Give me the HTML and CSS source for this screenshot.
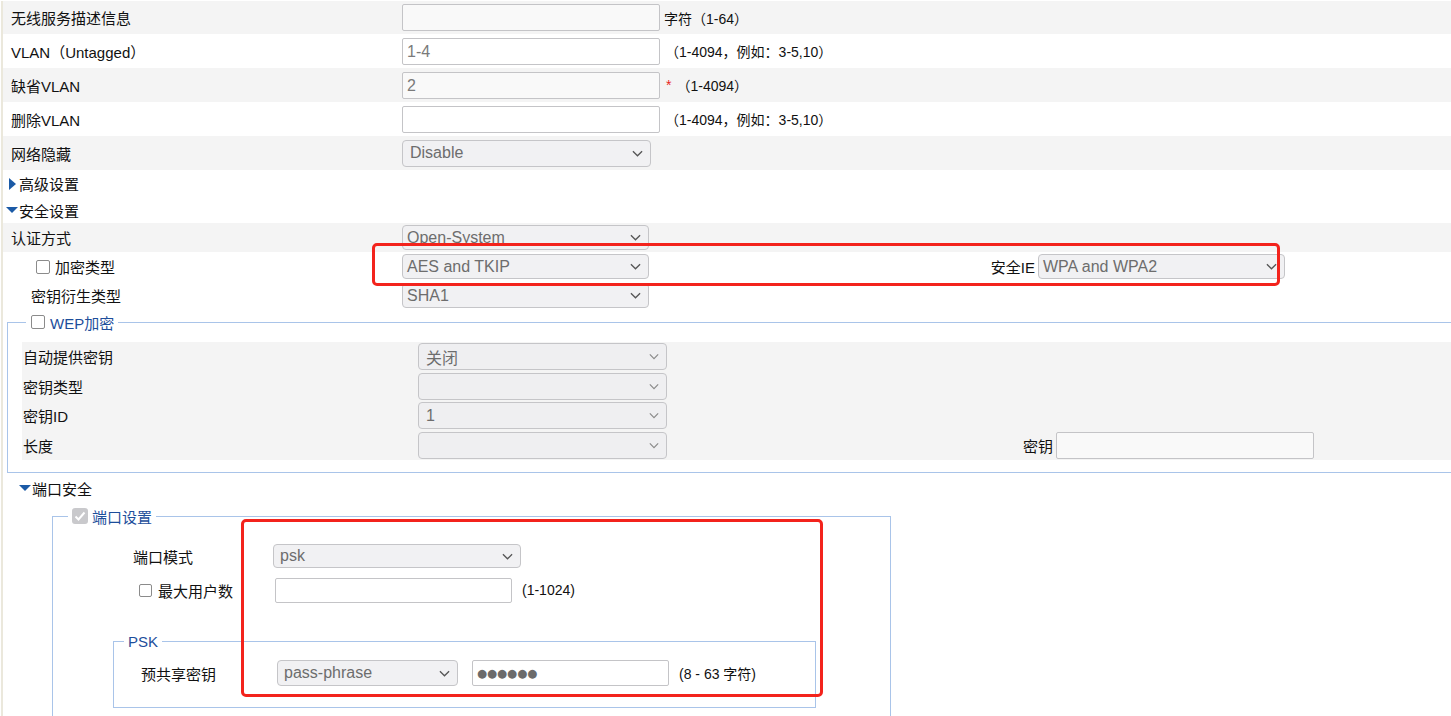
FILE: index.html
```html
<!DOCTYPE html>
<html lang="zh-CN">
<head>
    <meta charset="UTF-8">
    <title>无线服务配置</title>
    <link rel="stylesheet" href="styles.css">
</head>
<body>
<div class="page">
    <div class="row alt">
        <div class="label">无线服务描述信息</div>
        <div class="text-input muted"></div>
        <span class="hint near">字符（1-64）</span>
    </div>
    <div class="row">
        <div class="label">VLAN（Untagged）</div>
        <div class="text-input">1-4</div>
        <span class="hint">（1-4094，例如：3-5,10）</span>
    </div>
    <div class="row alt">
        <div class="label">缺省VLAN</div>
        <div class="text-input muted">2</div>
        <span class="required">*</span>
        <span class="hint">（1-4094）</span>
    </div>
    <div class="row">
        <div class="label">删除VLAN</div>
        <div class="text-input"></div>
        <span class="hint">（1-4094，例如：3-5,10）</span>
    </div>
    <div class="row alt">
        <div class="label">网络隐藏</div>
        <div class="select tall"><span>Disable</span><svg class="chev" viewBox="0 0 12 7"><path d="M1 1l5 5 5-5"/></svg></div>
    </div>

    <div class="toggle first"><span class="tri-right"></span>高级设置</div>
    <div class="toggle second"><span class="tri-down"></span>安全设置</div>

    <div class="sec-row alt">
        <div class="label">认证方式</div>
        <div class="cell-ctrl">
            <div class="select"><span>Open-System</span><svg class="chev" viewBox="0 0 12 7"><path d="M1 1l5 5 5-5"/></svg></div>
        </div>
    </div>
    <div class="sec-row">
        <div class="label indent-check"><span class="check"></span>加密类型</div>
        <div class="cell-ctrl">
            <div class="select"><span>AES and TKIP</span><svg class="chev" viewBox="0 0 12 7"><path d="M1 1l5 5 5-5"/></svg></div>
        </div>
        <div class="label2">安全IE</div>
        <div class="select"><span>WPA and WPA2</span><svg class="chev" viewBox="0 0 12 7"><path d="M1 1l5 5 5-5"/></svg></div>
    </div>
    <div class="sec-row">
        <div class="label indent">密钥衍生类型</div>
        <div class="cell-ctrl">
            <div class="select"><span>SHA1</span><svg class="chev" viewBox="0 0 12 7"><path d="M1 1l5 5 5-5"/></svg></div>
        </div>
    </div>

    <fieldset class="wep">
        <legend><span class="check"></span>WEP加密</legend>
        <div class="wep-body">
            <div class="wep-row">
                <div class="wep-label">自动提供密钥</div>
                <div class="cell-ctrl">
                    <div class="select light"><span>关闭</span><svg class="chev" viewBox="0 0 12 7"><path d="M1 1l5 5 5-5"/></svg></div>
                </div>
            </div>
            <div class="wep-row">
                <div class="wep-label">密钥类型</div>
                <div class="cell-ctrl">
                    <div class="select light"><span></span><svg class="chev" viewBox="0 0 12 7"><path d="M1 1l5 5 5-5"/></svg></div>
                </div>
            </div>
            <div class="wep-row">
                <div class="wep-label">密钥ID</div>
                <div class="cell-ctrl">
                    <div class="select light"><span>1</span><svg class="chev" viewBox="0 0 12 7"><path d="M1 1l5 5 5-5"/></svg></div>
                </div>
            </div>
            <div class="wep-row">
                <div class="wep-label">长度</div>
                <div class="cell-ctrl">
                    <div class="select light"><span></span><svg class="chev" viewBox="0 0 12 7"><path d="M1 1l5 5 5-5"/></svg></div>
                </div>
                <div class="label2 wide">密钥</div>
                <div class="text-input muted"></div>
            </div>
        </div>
    </fieldset>

    <div class="toggle port"><span class="tri-down"></span>端口安全</div>

    <fieldset class="port-set">
        <legend><span class="check checked"><svg viewBox="0 0 16 16"><path d="M3.5 8.5l3 3 6-7"/></svg></span>端口设置</legend>
        <div class="port-row">
            <div class="port-label">端口模式</div>
            <div class="select psk-mode"><span>psk</span><svg class="chev" viewBox="0 0 12 7"><path d="M1 1l5 5 5-5"/></svg></div>
        </div>
        <div class="port-row">
            <div class="port-label boxed"><span class="check small"></span>最大用户数</div>
            <div class="text-input users"></div>
            <span class="hint gap">(1-1024)</span>
        </div>

        <fieldset class="psk">
            <legend>PSK</legend>
            <div class="port-row">
                <div class="psk-label">预共享密钥</div>
                <div class="select phrase"><span>pass-phrase</span><svg class="chev" viewBox="0 0 12 7"><path d="M1 1l5 5 5-5"/></svg></div>
                <div class="text-input secret"><span class="dots">●●●●●●</span></div>
                <span class="hint gap">(8 - 63 字符)</span>
            </div>
        </fieldset>
    </fieldset>

    <div class="mark mark-ie"></div>
    <div class="mark mark-port"></div>
</div>
</body>
</html>
```

FILE: styles.css
```css
body {
    margin: 0;
    overflow: hidden;
    font-family: 'Liberation Sans', 'Noto Sans CJK SC', sans-serif;
    font-size: 15px;
    color: #111;
    background: #fff;
}
.page {
    position: relative;
    width: 1480px;
    margin-left: 1px;
    padding-top: 0;
    border-left: 2px solid #ebe8dc;
    min-height: 760px;
}
.row {
    display: flex;
    align-items: center;
    height: 34px;
}
.row:first-child {
    margin-top: 1px;
    height: 33px;
}
.alt {
    background-color: #f4f4f4;
}
.label {
    width: 399px;
    padding-left: 8px;
    box-sizing: border-box;
    flex: none;
}
.label.indent {
    padding-left: 28px;
}
.label.indent-check {
    display: flex;
    align-items: center;
    padding-left: 33px;
}
.text-input {
    width: 258px;
    height: 27px;
    box-sizing: border-box;
    border: 1px solid #c4c4c7;
    border-radius: 2px;
    background: #fff;
    padding: 0 4px;
    font-size: 16px;
    line-height: 25px;
    color: #7a7a7a;
    flex: none;
}
.text-input.muted {
    background: #f9f9f9;
}
.hint {
    margin-left: 5px;
    font-size: 14px;
}
.hint.near {
    margin-left: 4px;
}
.hint.gap {
    margin-left: 10px;
}
.required {
    color: #e8261e;
    margin-left: 6px;
    font-size: 14px;
}
.select {
    display: flex;
    align-items: center;
    justify-content: space-between;
    width: 247px;
    height: 25px;
    box-sizing: border-box;
    border: 1px solid #c5c5c8;
    border-radius: 4px;
    background: #f1f1f3;
    padding: 0 7px 0 4px;
    font-size: 16px;
    color: #6d6d6d;
    flex: none;
}
.select.tall {
    width: 249px;
    height: 27px;
    padding-left: 7px;
}
.select.light {
    width: 249px;
    height: 27px;
    padding-left: 7px;
    background: #efeff1;
}
.select.light .chev {
    stroke: #8a8a8a;
    width: 10px;
}
.chev {
    width: 11px;
    height: 7px;
    fill: none;
    stroke: #555;
    stroke-width: 1.4;
}
.toggle {
    display: flex;
    align-items: center;
    height: 26px;
}
.toggle.first {
    height: 27px;
    padding-left: 6px;
}
.toggle.second {
    padding-left: 3px;
}
.toggle.port {
    height: 30px;
    padding-left: 16px;
}
.tri-right {
    width: 0;
    height: 0;
    border-top: 6px solid transparent;
    border-bottom: 6px solid transparent;
    border-left: 7px solid #1b5aa6;
    margin-right: 3px;
}
.tri-down {
    width: 0;
    height: 0;
    border-left: 6px solid transparent;
    border-right: 6px solid transparent;
    border-top: 6px solid #1b5aa6;
    margin-right: 1px;
}
.sec-row {
    display: flex;
    align-items: center;
    height: 29px;
}
.cell-ctrl {
    width: 400px;
    flex: none;
}
.label2 {
    width: 236px;
    text-align: right;
    padding-right: 3px;
    box-sizing: border-box;
    flex: none;
}
.label2.wide {
    width: 238px;
}
.check {
    display: inline-block;
    width: 14px;
    height: 14px;
    box-sizing: border-box;
    border: 1px solid #8b8b8b;
    border-radius: 2px;
    background: #fff;
    margin-right: 5px;
    flex: none;
}
.check.small {
    width: 13px;
    height: 13px;
    margin-right: 6px;
}
.check.checked {
    width: 16px;
    height: 16px;
    border: none;
    border-radius: 3px;
    background: #c9c9cc;
    margin-right: 4px;
}
.check.checked svg {
    display: block;
    width: 16px;
    height: 16px;
    fill: none;
    stroke: #fff;
    stroke-width: 2;
}
fieldset {
    border: 1px solid #a9c4e9;
    margin: 0;
    min-width: 0;
}
legend {
    display: flex;
    align-items: center;
    height: 20px;
    color: #1d4e9b;
    font-size: 15px;
}
.wep {
    margin: 2px 0 0 4px;
    padding: 0 0 12px 14px;
}
.wep legend {
    margin-left: 4px;
    padding: 0 4px 0 5px;
}
.wep-body {
    margin-top: 10px;
    background: #f4f4f4;
}
.wep-row {
    display: flex;
    align-items: center;
    height: 29.5px;
}
.wep-label {
    width: 396px;
    padding-left: 1px;
    box-sizing: border-box;
    flex: none;
}
.port-set {
    width: 839px;
    box-sizing: border-box;
    margin: 3px 0 0 49px;
    padding: 13px 0 40px 0;
}
.port-set > legend {
    margin-left: 15px;
    padding: 0 4px;
}
.port-row {
    display: flex;
    align-items: center;
    height: 34px;
}
.port-label {
    width: 140px;
    margin-left: 80px;
    flex: none;
}
.port-label.boxed {
    display: flex;
    align-items: center;
    width: 142px;
    padding-left: 6px;
    box-sizing: border-box;
}
.select.psk-mode {
    width: 248px;
    height: 24px;
    padding-left: 6px;
}
.text-input.users {
    width: 237px;
    height: 25px;
}
.psk {
    width: 703px;
    box-sizing: border-box;
    margin: 24px 0 0 60px;
    padding: 5px 0 17px 0;
}
.psk legend {
    margin-left: 10px;
    padding: 0 4px;
}
.psk-label {
    width: 136px;
    margin-left: 27px;
    flex: none;
}
.select.phrase {
    width: 181px;
    height: 26px;
    padding-left: 6px;
}
.text-input.secret {
    width: 197px;
    height: 26px;
    margin-left: 14px;
    display: flex;
    align-items: center;
}
.dots {
    font-family: 'DejaVu Sans', sans-serif;
    font-size: 11.5px;
    color: #6b6b6b;
}
.mark {
    position: absolute;
    border: 3px solid #f3231c;
    border-radius: 5px;
    box-sizing: border-box;
}
.mark-ie {
    left: 369px;
    top: 242px;
    width: 908px;
    height: 43px;
}
.mark-port {
    left: 238px;
    top: 518px;
    width: 582px;
    height: 178px;
}
```
